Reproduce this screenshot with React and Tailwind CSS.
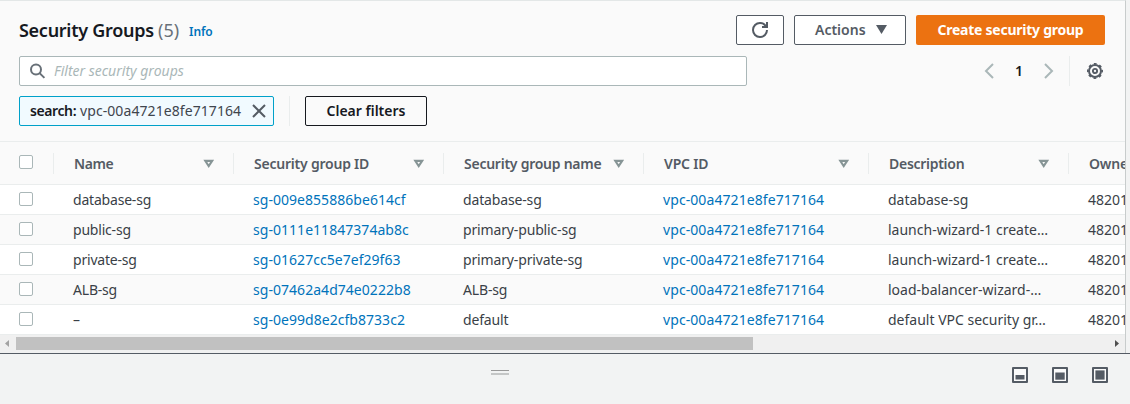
const columns = [
  { label: 'Name', width: 'w-[180px]', track: 'tracking-[-0.4px]' },
  { label: 'Security group ID', width: 'w-[210px]', track: 'tracking-[-0.22px]' },
  { label: 'Security group name', width: 'w-[200px]', track: 'tracking-[-0.25px]' },
  { label: 'VPC ID', width: 'w-[225px]', track: 'tracking-[-0.2px]' },
  { label: 'Description', width: 'w-[200px]', track: 'tracking-[-0.28px]' },
];

const vpc = 'vpc-00a4721e8fe717164';
const rows = [
  ['database-sg', 'sg-009e855886be614cf', 'database-sg', 'database-sg'],
  ['public-sg', 'sg-0111e11847374ab8c', 'primary-public-sg', 'launch-wizard-1 create…'],
  ['private-sg', 'sg-01627cc5e7ef29f63', 'primary-private-sg', 'launch-wizard-1 create…'],
  ['ALB-sg', 'sg-07462a4d74e0222b8', 'ALB-sg', 'load-balancer-wizard-…'],
  ['–', 'sg-0e99d8e2cfb8733c2', 'default', 'default VPC security gr…'],
];

function Checkbox() {
  return <span className="block size-[14px] rounded-[2px] border border-[#aab7b8] bg-white" />;
}

function SortIcon() {
  return (
    <svg className="mr-[19px] h-[9px] w-[11px] shrink-0" viewBox="0 0 11 9" fill="none">
      <path d="M2.3 1.9h6.8L5.7 7z" stroke="#879596" strokeWidth="2.1" />
    </svg>
  );
}

function Header() {
  return (
    <div className="flex h-[141px] flex-col border-b border-[#eaeded] bg-[#fafafa] pt-[14px] pr-[20px] pl-[19px]">
      <div className="flex h-[30px] items-center">
        <h1 className="w-[135px] pb-px text-[18px] leading-[22px] font-semibold tracking-[-0.28px] whitespace-nowrap text-[#16191f]">Security Groups</h1>
        <span className="ml-[4px] pb-px text-[18px] leading-[22px] text-[#687078]">(5)</span>
        <a className="mt-[3px] ml-[10px] text-[12px] leading-[16px] font-semibold tracking-[-0.1px] text-[#0073bb]">Info</a>
        <div className="ml-auto flex gap-[10px]">
          <button className="flex h-[30px] w-[48px] items-center justify-center rounded-[2px] border border-[#545b64] bg-white">
            <svg className="size-4" viewBox="0 0 16 16" fill="none" stroke="#545b64" strokeWidth="2">
              <path d="M10 5h5V0" />
              <path d="M15 8a6.96 6.96 0 0 1-7 7 6.96 6.96 0 0 1-7-7 6.96 6.96 0 0 1 7-7 6.87 6.87 0 0 1 6.3 4" />
            </svg>
          </button>
          <button className="flex h-[30px] w-[112px] items-center rounded-[2px] border border-[#545b64] bg-white pb-[2px] pl-[20px] text-[14px] font-semibold text-[#545b64]">
            <span>Actions</span>
            <svg className="mt-px mr-[18px] ml-auto h-[9px] w-[11px]" viewBox="0 0 11 9">
              <path d="M0 0h11L5.5 9z" fill="#545b64" />
            </svg>
          </button>
          <button className="h-[30px] w-[189px] rounded-[2px] bg-[#ec7211] pb-[2px] text-[14px] font-bold tracking-[-0.25px] whitespace-nowrap text-white">
            Create security group
          </button>
        </div>
      </div>
      <div className="mt-[11px] flex h-[30px] items-center">
        <div className="flex h-[30px] w-[728px] items-center rounded-[2px] border border-[#aab7b8] bg-white pl-[10px]">
          <svg className="size-4" viewBox="0 0 16 16" fill="none" stroke="#687078" strokeWidth="2">
            <circle cx="6" cy="6.5" r="5" />
            <path d="M9.6 10.1 14.4 14.9" />
          </svg>
          <span className="ml-[8px] pb-px text-[14px] text-[#aab7b8] italic">Filter security groups</span>
        </div>
        <div className="ml-auto flex items-center">
          <svg className="-ml-px h-[16px] w-[10px]" viewBox="0 0 10 16" fill="none" stroke="#aab7b8" strokeWidth="2">
            <path d="M9 1 2 8l7 7" />
          </svg>
          <span className="w-[50px] pb-[2px] text-center text-[14px] font-semibold text-[#16191f]">1</span>
          <svg className="h-[16px] w-[10px]" viewBox="0 0 10 16" fill="none" stroke="#aab7b8" strokeWidth="2">
            <path d="M1 1 8 8l-7 7" />
          </svg>
          <span className="ml-[15px] h-[30px] w-px bg-[#eaeded]" />
          <svg className="mr-[2px] ml-[17px] size-4" viewBox="0 0 16 16" fill="none" stroke="#545b64">
            <circle cx="8" cy="8" r="6" strokeWidth="2" />
            <circle cx="8" cy="8" r="7.2" strokeWidth="1.6" strokeDasharray="2.83 2.83" strokeDashoffset="1.41" />
            <circle cx="8" cy="8" r="2.1" strokeWidth="1.9" />
          </svg>
        </div>
      </div>
      <div className="mt-[10px] flex h-[30px] items-center">
        <div className="flex h-[30px] w-[255px] items-center rounded-[2px] border border-[#00a1c9] bg-[#f1faff] pl-[10px] text-[14px] whitespace-nowrap text-[#16191f]">
          <span className="w-[50px] pb-px font-semibold tracking-[-0.4px]">search:</span>
          <span className="pb-px tracking-[0.08px] text-[#3f454d]">{vpc}</span>
          <svg className="mr-[6px] ml-auto size-[16px]" viewBox="0 0 16 16" fill="none" stroke="#545b64" strokeWidth="2">
            <path d="m2 2 12 12M14 2 2 14" />
          </svg>
        </div>
        <span className="ml-[15px] h-[30px] w-px bg-[#eaeded]" />
        <button className="ml-[15px] h-[30px] w-[122px] rounded-[2px] border border-[#16191f] bg-[#fafafa] pb-px text-[14px] font-semibold text-[#16191f]">
          Clear filters
        </button>
      </div>
    </div>
  );
}

function Table() {
  return (
    <div className="overflow-hidden whitespace-nowrap">
      <div className="flex h-[43px] w-[1269px] items-center border-b border-[#eaeded] bg-[#fafafa] text-[14px] font-semibold text-[#545b64]">
        <div className="flex h-[21px] w-[54px] items-start border-r border-[#eaeded] pt-[2px] pl-[19px]">
          <Checkbox />
        </div>
        {columns.map((c) => (
          <div key={c.label} className={`flex h-[21px] items-center justify-between border-r border-[#eaeded] pl-[20px] ${c.width}`}>
            <span className={c.track}>{c.label}</span>
            <SortIcon />
          </div>
        ))}
        <div className="w-[200px] pl-[20px] tracking-[-0.2px]">Owner</div>
      </div>
      {rows.map((r) => (
        <div key={r[1]} className="flex h-[30px] w-[1269px] items-center border-b border-[#eaeded] bg-white text-[14px] text-[#3a3f47] odd:bg-[#fafafa]">
          <div className="w-[54px] pb-px pl-[19px]"><Checkbox /></div>
          <div className="w-[180px] pl-[19px] tracking-[-0.2px]">{r[0]}</div>
          <div className="w-[210px] pl-[19px] tracking-[0.04px] text-[#0073bb]">{r[1]}</div>
          <div className="w-[200px] pl-[19px] tracking-[-0.15px]">{r[2]}</div>
          <div className="w-[225px] pl-[19px] tracking-[0.08px] text-[#0073bb]">{vpc}</div>
          <div className="w-[200px] pl-[19px]">{r[3]}</div>
          <div className="w-[200px] pl-[19px]">482017</div>
        </div>
      ))}
    </div>
  );
}

function ScrollBar() {
  return (
    <div className="flex h-[18px] items-center bg-[#f0f0f0] pb-[2px]">
      <svg className="ml-[5px] h-[7px] w-[4px]" viewBox="0 0 4 7"><path d="M4 0v7L0 3.5z" fill="#a3a3a3" /></svg>
      <div className="ml-[7px] h-[13px] w-[737px] bg-[#c1c1c1]" />
      <svg className="mr-[6px] ml-auto h-[7px] w-[4px]" viewBox="0 0 4 7"><path d="M0 0v7l4-3.5z" fill="#505050" /></svg>
    </div>
  );
}

function PanelIcon({ children }) {
  return (
    <svg className="size-4" viewBox="0 0 16 16">
      <rect x="1" y="1" width="14" height="14" fill="#fafafa" stroke="#545b64" strokeWidth="2" strokeLinejoin="round" />
      {children}
    </svg>
  );
}

export default function App() {
  return (
    <div className="h-[404px] w-[1130px] overflow-hidden bg-[#f2f3f3] font-['Noto_Sans',sans-serif]">
      <div className="h-[353px] w-[1126px] overflow-hidden border-t border-r border-t-[#e3e7e7] border-r-[#c8cccc]">
        <Header />
        <Table />
        <ScrollBar />
      </div>
      <div className="flex h-[51px] items-start border-t border-[#545b64]">
        <div className="mt-[16px] ml-[491px] h-[5px] w-[18px] border-t border-b-2 border-t-[#999] border-b-[#c4c6c6]" />
        <div className="mt-[13px] mr-[22px] ml-auto flex gap-[24px]">
          <PanelIcon><rect x="3.5" y="8" width="9" height="4.5" fill="#545b64" /></PanelIcon>
          <PanelIcon><rect x="3.3" y="5.5" width="9.4" height="7.2" fill="#545b64" /></PanelIcon>
          <PanelIcon><rect x="3.4" y="3.4" width="9.2" height="9.2" fill="#545b64" /></PanelIcon>
        </div>
      </div>
    </div>
  );
}
